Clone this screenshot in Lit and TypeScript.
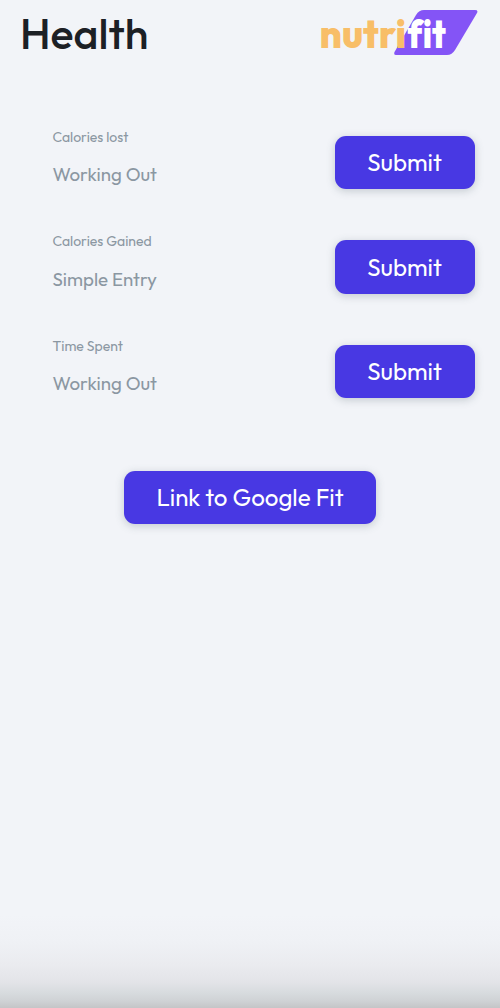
import { LitElement, html, css } from "lit";
import { customElement, property } from "lit/decorators.js";

@customElement("nutrifit-logo")
class NutrifitLogo extends LitElement {
  static styles = css`
    :host { display: block; width: 162px; height: 68px; }
    svg { display: block; }
    .word { font-family: "Outfit", "Inter", sans-serif; font-weight: 800; font-size: 40.500px; font-variant-ligatures: none; }
    .nutri { fill: #f8be68; }
    .fit { fill: #fff; }
  `;
  render() {
    return html`<svg width="162" height="68" viewBox="316 0 162 68" role="img" aria-label="nutrifit">
      <path fill="#8454f6" d="M424 10H475Q478.500 10 477 13L455 50Q452 55 447 55H396Q393.500 55 394.500 52L416 15Q419 10 424 10Z"/>
      <text class="word nutri" x="319.500" y="48" textLength="86.500" lengthAdjust="spacingAndGlyphs">nutri</text>
      <text class="word fit" x="407.500" y="48" textLength="38.500" lengthAdjust="spacingAndGlyphs">fit</text>
    </svg>`;
  }
}

@customElement("action-button")
class ActionButton extends LitElement {
  @property() label = "";
  static styles = css`
    :host { display: block; width: 140px; }
    :host([wide]) { width: 252.500px; }
    button {
      display: block; width: 100%; height: 53.500px; padding: 0; border: 0; border-radius: 11px;
      background: #4838e3; color: #fff; white-space: nowrap;
      font: 400 24.100px/52px "Outfit", "Lato", sans-serif;
      box-shadow: 0 2px 9px rgba(75, 95, 105, 0.28);
    }
  `;
  render() {
    return html`<button>${this.label}</button>`;
  }
}

@customElement("entry-row")
class EntryRow extends LitElement {
  @property() label = "";
  @property() value = "";
  static styles = css`
    :host { display: flex; justify-content: space-between; height: 54px; padding: 0 25.500px 0 52.500px; }
    .field { color: #8b97a2; font-family: "Outfit", "Lato", sans-serif; }
    .label { font-size: 14px; line-height: 18px; margin-top: -8px; }
    .value { font-size: 18.700px; line-height: 24px; margin-top: 16.500px; }
  `;
  render() {
    return html`
      <div class="field">
        <div class="label">${this.label}</div>
        <div class="value">${this.value}</div>
      </div>
      <action-button label="Submit"></action-button>`;
  }
}

@customElement("app-root")
class AppRoot extends LitElement {
  static styles = css`
    :host {
      display: flex; flex-direction: column; box-sizing: border-box; height: 1008px; overflow: hidden;
      background: linear-gradient(to bottom, #f2f4f8 0, #f2f4f8 915px, #eff1f5 942px, #eaebef 965px, #e3e4e8 982px, #d7dbde 993px, #cfd2d5 1001px, #c4c5c7 1008px);
    }
    header { display: flex; justify-content: space-between; height: 68px; padding: 0 22px 0 20px; }
    h1 { margin: 0; color: #1c2025; font: 500 43px/66px "Outfit", "Lato", sans-serif; }
    .rows { display: flex; flex-direction: column; gap: 50.500px; padding-top: 67.500px; }
    .link { align-self: center; margin-top: 72px; }
  `;
  render() {
    return html`
      <header><h1>Health</h1><nutrifit-logo></nutrifit-logo></header>
      <main class="rows">
        <entry-row label="Calories lost" value="Working Out"></entry-row>
        <entry-row label="Calories Gained" value="Simple Entry"></entry-row>
        <entry-row label="Time Spent" value="Working Out"></entry-row>
      </main>
      <action-button class="link" wide label="Link to Google Fit"></action-button>`;
  }
}
